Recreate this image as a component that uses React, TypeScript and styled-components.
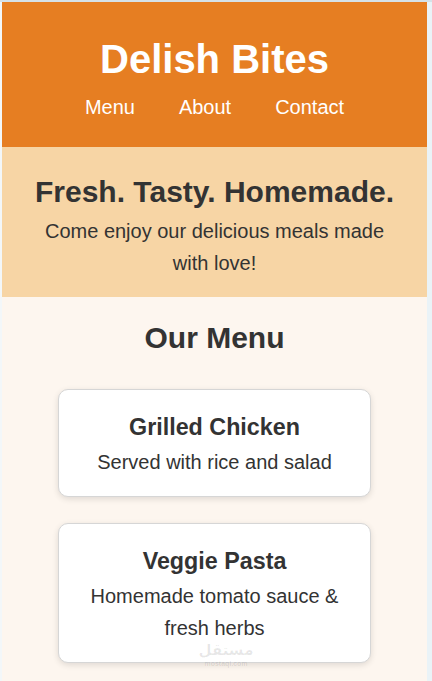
import React from 'react';
import styled, { createGlobalStyle } from 'styled-components';

const GlobalStyle = createGlobalStyle`
  html, body {
    margin: 0;
    padding: 0;
    background-color: #eaf3f7;
    font-family: "Liberation Sans", Arial, sans-serif;
    color: #333;
  }
  #root {
    padding: 2px 5px 0 2px;
    background: linear-gradient(to bottom, #d6e2e8 0, #d6e2e8 2px, transparent 2px),
      linear-gradient(to right, #f3f7f9 0, #f3f7f9 2px, transparent 2px);
  }
`;

const Page = styled.div`
  position: relative;
  background-color: #fdf6ef;
  overflow: hidden;
`;

const Header = styled.header`
  background-color: #e67e22;
  color: #fff;
  text-align: center;
  padding: 34px 20px 28px;
`;

const Logo = styled.h1`
  margin: 0;
  font-size: 40px;
  line-height: 46px;
  font-weight: bold;
`;

const Nav = styled.nav`
  display: flex;
  justify-content: center;
  gap: 44px;
  margin-top: 14px;
`;

const NavLink = styled.a`
  color: #fff;
  text-decoration: none;
  font-size: 20px;
  line-height: 23px;
`;

const Hero = styled.section`
  background-color: #f7d5a5;
  text-align: center;
  padding: 27px 32px 18px;
`;

const HeroTitle = styled.h2`
  margin: 0;
  font-size: 30px;
  line-height: 36px;
  font-weight: bold;
`;

const HeroText = styled.p`
  margin: 5px 0 0;
  font-size: 20px;
  line-height: 32px;
`;

const MenuSection = styled.section`
  padding: 23px 20px 40px;
  text-align: center;
`;

const SectionTitle = styled.h2`
  margin: 0 0 33px;
  font-size: 30px;
  line-height: 36px;
  font-weight: bold;
`;

const CardList = styled.div`
  display: flex;
  flex-direction: column;
  align-items: center;
  gap: 26px;
`;

const Card = styled.div`
  box-sizing: border-box;
  width: 313px;
  background-color: #fff;
  border: 1px solid #d6d6d6;
  border-radius: 10px;
  box-shadow: 0 2px 6px rgba(0, 0, 0, 0.12);
  padding: 23px 20px 18px;
`;

const CardTitle = styled.h3`
  margin: 0;
  font-size: 23.3px;
  line-height: 28px;
  font-weight: bold;
`;

const CardText = styled.p`
  margin: 5px 0 0;
  font-size: 20px;
  line-height: 32px;
`;

const Watermark = styled.div`
  position: absolute;
  left: 194px;
  top: 638px;
  width: 60px;
  text-align: center;
  color: rgba(0, 0, 0, 0.09);
  pointer-events: none;
`;

const WatermarkMain = styled.div`
  font-family: "DejaVu Sans", sans-serif;
  font-size: 15px;
  font-weight: bold;
  line-height: 20px;
`;

const WatermarkSub = styled.div`
  font-size: 7px;
  line-height: 8px;
  font-weight: bold;
`;

const dishes = [
  { name: 'Grilled Chicken', desc: 'Served with rice and salad' },
  { name: 'Veggie Pasta', desc: 'Homemade tomato sauce & fresh herbs' },
];

export default function App() {
  return (
    <>
      <GlobalStyle />
      <Page>
        <Header>
          <Logo>Delish Bites</Logo>
          <Nav>
            <NavLink href="#menu">Menu</NavLink>
            <NavLink href="#about">About</NavLink>
            <NavLink href="#contact">Contact</NavLink>
          </Nav>
        </Header>
        <Hero>
          <HeroTitle>Fresh. Tasty. Homemade.</HeroTitle>
          <HeroText>Come enjoy our delicious meals made with love!</HeroText>
        </Hero>
        <MenuSection id="menu">
          <SectionTitle>Our Menu</SectionTitle>
          <CardList>
            {dishes.map(d => (
              <Card key={d.name}>
                <CardTitle>{d.name}</CardTitle>
                <CardText>{d.desc}</CardText>
              </Card>
            ))}
          </CardList>
        </MenuSection>
        <Watermark>
          <WatermarkMain>مستقل</WatermarkMain>
          <WatermarkSub>mostaql.com</WatermarkSub>
        </Watermark>
      </Page>
    </>
  );
}
